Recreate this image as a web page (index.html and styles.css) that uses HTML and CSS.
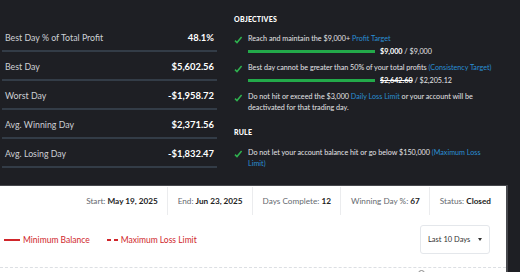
FILE: index.html
```
<!DOCTYPE html>
<html lang="en">
<head>
  <meta charset="UTF-8" />
  <meta name="viewport" content="width=device-width, initial-scale=1.0" />
  <title>Account Evaluation</title>
  <link rel="stylesheet" href="styles.css">
</head>
<body>

  <div class="top">
    <div class="stats">
      <div class="stat-row"><span class="stat-label">Best Day % of Total Profit</span><span class="stat-value">48.1%</span></div>
      <div class="stat-row"><span class="stat-label">Best Day</span><span class="stat-value">$5,602.56</span></div>
      <div class="stat-row"><span class="stat-label">Worst Day</span><span class="stat-value">-$1,958.72</span></div>
      <div class="stat-row"><span class="stat-label">Avg. Winning Day</span><span class="stat-value">$2,371.56</span></div>
      <div class="stat-row"><span class="stat-label">Avg. Losing Day</span><span class="stat-value">-$1,832.47</span></div>
    </div>

    <div class="objectives">
      <h4>OBJECTIVES</h4>

      <div class="obj">
        <svg class="check" width="9" height="8" viewBox="0 0 9 8"><path d="M1 4.6 L3 6.6 L7.6 1" fill="none" stroke="#2fb24f" stroke-width="1.5" /></svg>
        <div class="obj-body">
          <p>Reach and maintain the $9,000+ <a href="#">Profit Target</a></p>
          <div class="progress">
            <div class="bar"><div class="fill" style="width: 100%"></div></div>
            <span class="amount"><b>$9,000</b> / $9,000</span>
          </div>
        </div>
      </div>

      <div class="obj">
        <svg class="check" width="9" height="8" viewBox="0 0 9 8"><path d="M1 4.6 L3 6.6 L7.6 1" fill="none" stroke="#2fb24f" stroke-width="1.5" /></svg>
        <div class="obj-body">
          <p class="nowrap">Best day cannot be greater than 50% of your total profits <a href="#">(Consistency Target)</a></p>
          <div class="progress">
            <div class="bar"><div class="fill" style="width: 100%"></div></div>
            <span class="amount"><b><s>$2,642.60</s></b> / $2,205.12</span>
          </div>
        </div>
      </div>

      <div class="obj">
        <svg class="check" width="9" height="8" viewBox="0 0 9 8"><path d="M1 4.6 L3 6.6 L7.6 1" fill="none" stroke="#2fb24f" stroke-width="1.5" /></svg>
        <div class="obj-body">
          <p>Do not hit or exceed the $3,000 <a href="#">Daily Loss Limit</a> or your account will be<br>deactivated for that trading day.</p>
        </div>
      </div>

      <h4 class="rule">RULE</h4>

      <div class="obj">
        <svg class="check" width="9" height="8" viewBox="0 0 9 8"><path d="M1 4.6 L3 6.6 L7.6 1" fill="none" stroke="#2fb24f" stroke-width="1.5" /></svg>
        <div class="obj-body">
          <p>Do not let your account balance hit or go below $150,000 <a href="#">(Maximum Loss<br>Limit)</a></p>
        </div>
      </div>
    </div>
  </div>

  <div class="panel">
    <div class="meta">
      <div class="meta-item">Start: <b>May 19, 2025</b></div>
      <div class="meta-item">End: <b>Jun 23, 2025</b></div>
      <div class="meta-item">Days Complete: <b>12</b></div>
      <div class="meta-item">Winning Day %: <b>67</b></div>
      <div class="meta-item">Status: <b>Closed</b></div>
    </div>

    <div class="chart-head">
      <div class="legend">
        <span class="key"><span class="line solid"></span>Minimum Balance</span>
        <span class="key"><span class="line dashed"></span>Maximum Loss Limit</span>
      </div>
      <div class="select">Last 10 Days <span class="caret"></span></div>
    </div>

    <div class="grid-line"><span class="point"></span></div>
  </div>

</body>
</html>
```

FILE: styles.css
```
body {
  font-family: 'Lato', sans-serif;
  background: #1e1f24;
  margin: 0;
  width: 520px;
  height: 272px;
  overflow: hidden;
}

.top {
  display: flex;
  height: 185px;
  padding-left: 2px;
}

/* left stats list */
.stats {
  flex: 0 0 215px;
  padding-top: 23px;
}

.stat-row {
  display: flex;
  justify-content: space-between;
  align-items: center;
  box-sizing: border-box;
  height: 29px;
  padding: 1px 3px 0;
  border-bottom: 2px solid #333c47;
}

.stat-label {
  color: #cdd0d5;
  font-size: 8.8px;
}

.stat-value {
  color: #fff;
  font-weight: 700;
  font-size: 9.4px;
}

/* objectives */
.objectives {
  flex: 1;
  margin-left: 17px;
  padding-top: 14px;
  color: #e4e4e6;
  font-size: 7.2px;
}

.objectives h4 {
  margin: 0 0 9px;
  font-size: 7px;
  line-height: 10px;
  font-weight: 900;
  letter-spacing: 0.2px;
  color: #fff;
}

.objectives h4.rule {
  margin-top: 14px;
  margin-bottom: 10px;
}

.obj {
  display: flex;
  margin-bottom: 5px;
}

.check {
  flex: 0 0 9px;
  margin: 3px 5px 0 0;
}

.obj-body p {
  margin: 0;
  line-height: 11px;
}

.obj-body p.nowrap {
  white-space: nowrap;
}

.obj a {
  color: #2a8fd4;
  text-decoration: none;
}

.progress {
  display: flex;
  align-items: center;
  height: 12px;
  margin-top: 1px;
}

.bar {
  width: 127px;
  height: 3px;
  background: #333c47;
}

.fill {
  height: 100%;
  background: #23a94a;
}

.amount {
  margin-left: 5px;
  color: #e4e4e6;
}

.amount b {
  color: #fff;
}

/* white chart panel */
.panel {
  width: 506px;
  height: 87px;
  background: #fff;
  border-top: 1px solid #47484d;
  border-right: 2px solid #47484d;
  font-size: 8.2px;
}

.meta {
  display: flex;
  justify-content: flex-end;
  padding: 1px 15px 0 0;
}

.meta-item {
  padding: 0 9px 0 10px;
  line-height: 28px;
  color: #666a70;
  border-left: 1px solid #ebecee;
}

.meta-item:first-child {
  border-left: none;
}

.meta-item:last-child {
  padding-right: 0;
}

.meta-item b {
  color: #222;
}

.chart-head {
  display: flex;
  justify-content: space-between;
  align-items: center;
  padding: 10px 16px 0 4px;
}

.legend {
  display: flex;
  gap: 17px;
  color: #d0262b;
  font-size: 8.5px;
}

.key {
  display: flex;
  align-items: center;
}

.line {
  display: inline-block;
  width: 16px;
  height: 2px;
  margin-right: 3px;
  background: #d0262b;
}

.line.dashed {
  width: 11px;
  background: linear-gradient(to right, #d0262b 4px, transparent 4px, transparent 7px, #d0262b 7px);
}

.select {
  display: flex;
  align-items: center;
  width: 70px;
  height: 29px;
  box-sizing: border-box;
  padding-left: 7px;
  border: 1px solid #e4e7eb;
  border-radius: 3px;
  color: #333;
  font-size: 7.5px;
}

.caret {
  margin-left: 8px;
  border-left: 2.5px solid transparent;
  border-right: 2.5px solid transparent;
  border-top: 3px solid #333;
}

.grid-line {
  position: relative;
  margin-top: 13px;
  border-top: 1px dashed #dcdfe3;
}

.point {
  position: absolute;
  left: 418px;
  top: 2px;
  width: 5px;
  height: 5px;
  border: 1px solid #888;
  border-radius: 50%;
}
```
